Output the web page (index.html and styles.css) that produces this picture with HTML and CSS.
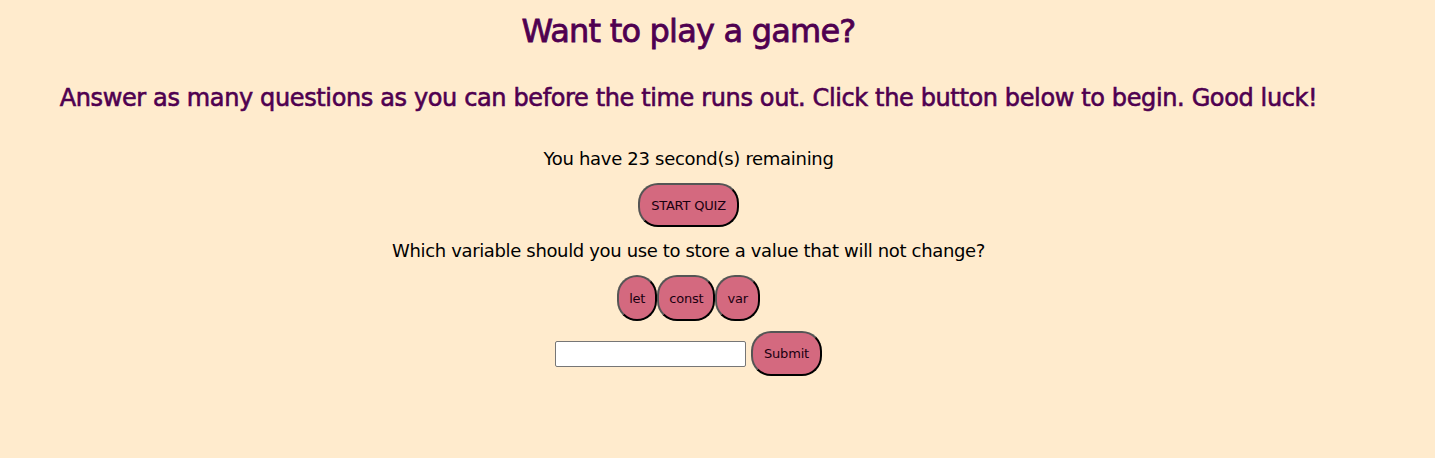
FILE: index.html
```html
<!DOCTYPE html>
<html>
<head>
<meta charset="utf-8">
<link rel="stylesheet" href="styles.css">
</head>
<body>
<main class="page">
  <h1 class="title">Want to play a game?</h1>
  <h2 class="intro">Answer as many questions as you can before the time runs out. Click the button below to begin. Good luck!</h2>
  <p class="timer">You have 23 second(s) remaining</p>
  <button class="btn start">START QUIZ</button>
  <p class="question">Which variable should you use to store a value that will not change?</p>
  <div class="choices">
    <button class="btn choice">let</button><button class="btn choice">const</button><button class="btn choice">var</button>
  </div>
  <form class="answer">
    <input class="answer-input" type="text">
    <button class="btn submit" type="button">Submit</button>
  </form>
</main>
</body>
</html>
```

FILE: styles.css
```css
html, body {
  margin: 0;
  background: #ffebcd;
}
body {
  font-family: "DejaVu Sans", Verdana, sans-serif;
  padding: 0 58px 0 0;
}
.page {
  display: flex;
  flex-direction: column;
  align-items: center;
  text-align: center;
}
.title {
  font-size: 32px;
  font-weight: normal;
  letter-spacing: -0.8px;
  -webkit-text-stroke: 0.8px #4f0050;
  color: #4f0050;
  margin: 13px 0 0;
  line-height: 37px;
}
.intro {
  font-size: 24px;
  font-weight: normal;
  letter-spacing: -0.37px;
  -webkit-text-stroke: 0.6px #4f0050;
  color: #4f0050;
  margin: 34px 0 0;
  line-height: 28px;
}
.timer {
  font-size: 18px;
  letter-spacing: -0.3px;
  color: #000;
  margin: 37px 0 0;
  line-height: 20px;
}
.btn {
  font-family: "DejaVu Sans", Verdana, sans-serif;
  font-size: 13px;
  letter-spacing: -0.2px;
  color: #1a0010;
  background: #d4697f;
  border: 2px solid;
  border-color: #555 #000 #000 #555;
  border-radius: 20px;
  cursor: pointer;
}
.start {
  margin-top: 14px;
  height: 44px;
  padding: 0 11px;
}
.question {
  font-size: 18px;
  letter-spacing: -0.35px;
  margin: 14px 0 0;
  line-height: 20px;
}
.choices {
  display: flex;
  margin-top: 14px;
}
.choice {
  height: 46px;
  padding: 0 10px;
  margin: 0;
}
.answer {
  display: flex;
  align-items: center;
  gap: 5px;
  margin: 10px 0 0;
}
.answer-input {
  width: 191px;
  height: 26px;
  box-sizing: border-box;
  border: 1px solid #767676;
  border-radius: 2px;
  background: #fff;
  padding: 1px 2px;
}
.submit {
  height: 45px;
  padding: 0 11px;
}
```
